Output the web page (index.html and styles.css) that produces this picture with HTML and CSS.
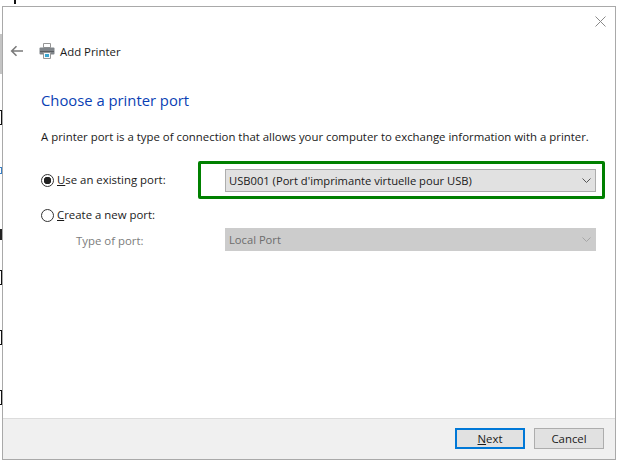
FILE: index.html
```html
<!DOCTYPE html>
<html lang="en">
<head>
<meta charset="utf-8">
<title>Add Printer</title>
<link rel="stylesheet" href="styles.css">
</head>
<body>
<div class="backdrop">
  <i class="bit bit-top"></i>
  <i class="bit bit-gray"></i>
  <i class="bit bit-box bit-a"></i>
  <i class="bit bit-blue"></i>
  <i class="bit bit-dark"></i>
  <i class="bit bit-box bit-b"></i>
  <i class="bit bit-box bit-c"></i>
  <i class="bit bit-box bit-d"></i>
</div>
<main class="window">
  <svg class="close" width="11" height="11" viewBox="0 0 11 11" aria-hidden="true"><path d="M.5.5l10 10M10.500.5l-10 10" stroke="#8a8a8a" fill="none"/></svg>
  <header class="head">
    <svg class="back" width="14" height="12" viewBox="0 0 14 12" aria-hidden="true"><path d="M13 6H2M6.500 1.200 1.700 6l4.800 4.800" stroke="#7a7a7a" stroke-width="1.600" fill="none"/></svg>
    <svg class="printer" width="16" height="16" viewBox="0 0 16 16" aria-hidden="true">
      <path d="M4.500 .5h7v4h-7z" fill="#fff" stroke="#969696"/>
      <rect x=".5" y="4.500" width="15" height="7" rx="1" fill="#80858a"/>
      <rect x="1" y="8" width="14" height="1" fill="#5a5e62"/>
      <path d="M4.500 9.500h7v6h-7z" fill="#f4f8fb" stroke="#969696"/>
      <rect x="6" y="11" width="4" height="3" fill="#3aa5cf"/>
    </svg>
    <span class="head-title">Add Printer</span>
  </header>
  <section class="body">
    <h1 class="title">Choose a printer port</h1>
    <p class="intro">A printer port is a type of connection that allows your computer to exchange information with a printer.</p>
    <div class="port-row existing">
      <label class="radio-label"><span class="radio checked"></span><span><u>U</u>se an existing port:</span></label>
      <div class="highlight">
        <div class="select"><span>USB001 (Port d'imprimante virtuelle pour USB)</span>
          <svg class="chev" width="9" height="5" viewBox="0 0 9 5" aria-hidden="true"><path d="M.5.5 4.500 4.500 8.500.5" stroke="#555" fill="none"/></svg>
        </div>
      </div>
    </div>
    <label class="radio-label new"><span class="radio"></span><span><u>C</u>reate a new port:</span></label>
    <div class="port-row type">
      <span class="type-label">Type of port:</span>
      <div class="select disabled"><span>Local Port</span>
        <svg class="chev" width="9" height="5" viewBox="0 0 9 5" aria-hidden="true"><path d="M.5.5 4.500 4.500 8.500.5" stroke="#a6a6a6" fill="none"/></svg>
      </div>
    </div>
  </section>
  <footer class="foot">
    <button class="btn primary"><u>N</u>ext</button>
    <button class="btn">Cancel</button>
  </footer>
</main>
</body>
</html>
```

FILE: styles.css
```css
* { box-sizing: border-box; }
html, body { margin: 0; height: 100%; }
body {
  background: #fff;
  width: 623px;
  height: 468px;
  overflow: hidden;
  position: relative;
  padding: 6px 7px 8px 2px;
  font-family: "Open Sans", "Noto Sans", sans-serif;
  font-size: 11.4px;
  color: #1a1a1a;
}
.bit { position: absolute; display: block; }
.bit-top { left: 14px; top: 0; width: 2px; height: 4px; background: #111; }
.bit-gray { left: 0; top: 34px; width: 2px; height: 40px; background: #c4c4c4; }
.bit-box { left: 0; width: 2px; height: 15px; border: 1px solid #111; border-left: 0; }
.bit-a { top: 110px; }
.bit-b { top: 270px; }
.bit-c { top: 330px; }
.bit-d { top: 390px; }
.bit-blue { left: 0; top: 167px; width: 2px; height: 7px; border: 1px solid #3a7fc4; border-left: 0; }
.bit-dark { left: 0; top: 229px; width: 2px; height: 11px; background: #222; }
.window {
  position: relative;
  height: 100%;
  background: #fff;
  border: 1px solid #a9a9a9;
  display: flex;
  flex-direction: column;
}
.close { position: absolute; top: 9px; right: 9px; }
.head {
  display: flex;
  align-items: center;
  height: 16px;
  margin: 36px 0 0 7px;
}
.back { margin-right: 15px; }
.printer { margin-right: 5px; }
.body { flex: 1; padding: 0 19px 0 38px; }
.title {
  margin: 31px 0 0;
  font-size: 14.800px;
  line-height: 20px;
  font-weight: 400;
  color: #0a3fb4;
}
.intro { margin: 19px 0 0; line-height: 16px; white-space: nowrap; }
.port-row { display: flex; align-items: center; }
.existing { margin-top: 16px; }
.radio-label { display: flex; align-items: center; gap: 3px; line-height: 16px; }
.existing .radio-label { width: 157px; }
.radio {
  width: 13px;
  height: 13px;
  border: 1px solid #333;
  border-radius: 50%;
  background: #fff;
  display: block;
}
.radio.checked { background: radial-gradient(circle, #222 0 3.500px, #fff 4px); }
.highlight {
  flex: 1;
  border: 3px solid #008000;
  border-radius: 2px;
  padding: 5px 6px 4px 24px;
  margin-right: -9px;
}
.select {
  height: 23px;
  background: #e1e1e1;
  border: 1px solid #adadad;
  display: flex;
  align-items: center;
  justify-content: space-between;
  padding: 0 4px 0 3px;
  font-size: 11.200px;
}
.new { margin-top: 8px; }
.type { margin-top: 5px; padding-left: 35px; }
.type-label { width: 149px; color: #7c7c7c; padding-top: 2px; }
.type .select { flex: 1; background: #cccccc; border-color: #cccccc; color: #6d6d6d; }
.foot {
  height: 41px;
  background: #f0f0f0;
  border-top: 1px solid #dcdcdc;
  display: flex;
  justify-content: flex-end;
  align-items: center;
  gap: 9px;
  padding: 0 11px 1px 0;
}
.btn {
  width: 70px;
  height: 21px;
  font: inherit;
  color: #1a1a1a;
  padding: 0;
  background: #e1e1e1;
  border: 1px solid #adadad;
}
.primary { border: 2px solid #0078d7; }
```
